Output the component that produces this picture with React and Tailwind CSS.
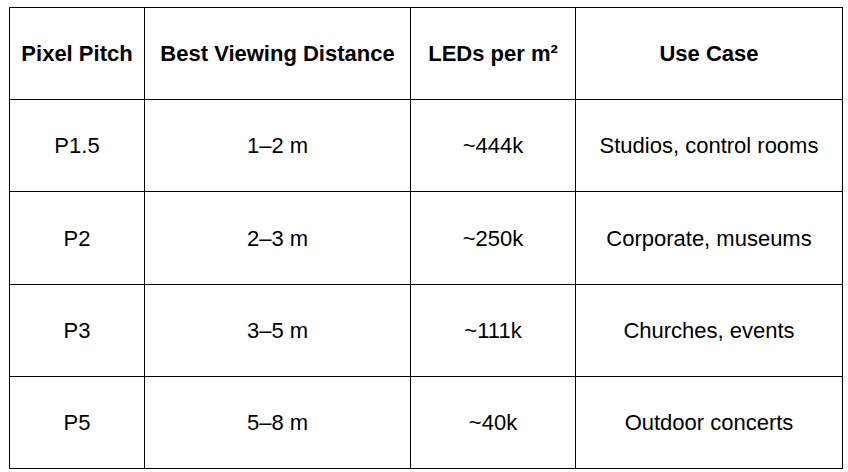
const rows = [
  ['P1.5', '1–2 m', '~444k', 'Studios, control rooms'],
  ['P2', '2–3 m', '~250k', 'Corporate, museums'],
  ['P3', '3–5 m', '~111k', 'Churches, events'],
  ['P5', '5–8 m', '~40k', 'Outdoor concerts'],
];

export default function App() {
  return (
    <div className="h-[472px] w-[848px] bg-white pl-[9px] pt-[7px] font-['Liberation_Sans',Arial,sans-serif] text-[22px] text-black">
      <table className="w-[833px] table-fixed border-collapse">
        <colgroup>
          <col className="w-[135px]" />
          <col className="w-[266px]" />
          <col className="w-[165px]" />
          <col className="w-[267px]" />
        </colgroup>
        <thead>
          <tr className="h-[92px]">
            {['Pixel Pitch', 'Best Viewing Distance', 'LEDs per m²', 'Use Case'].map((h) => (
              <th key={h} className="border border-black p-0 text-center align-middle font-bold">
                {h}
              </th>
            ))}
          </tr>
        </thead>
        <tbody>
          {rows.map((r, n) => (
            <tr key={r[0]} className={n === 1 ? 'h-[93px]' : 'h-[92px]'}>
              {r.map((c, i) => (
                <td key={i} className="border border-black p-0 text-center align-middle">
                  {c}
                </td>
              ))}
            </tr>
          ))}
        </tbody>
      </table>
    </div>
  );
}
